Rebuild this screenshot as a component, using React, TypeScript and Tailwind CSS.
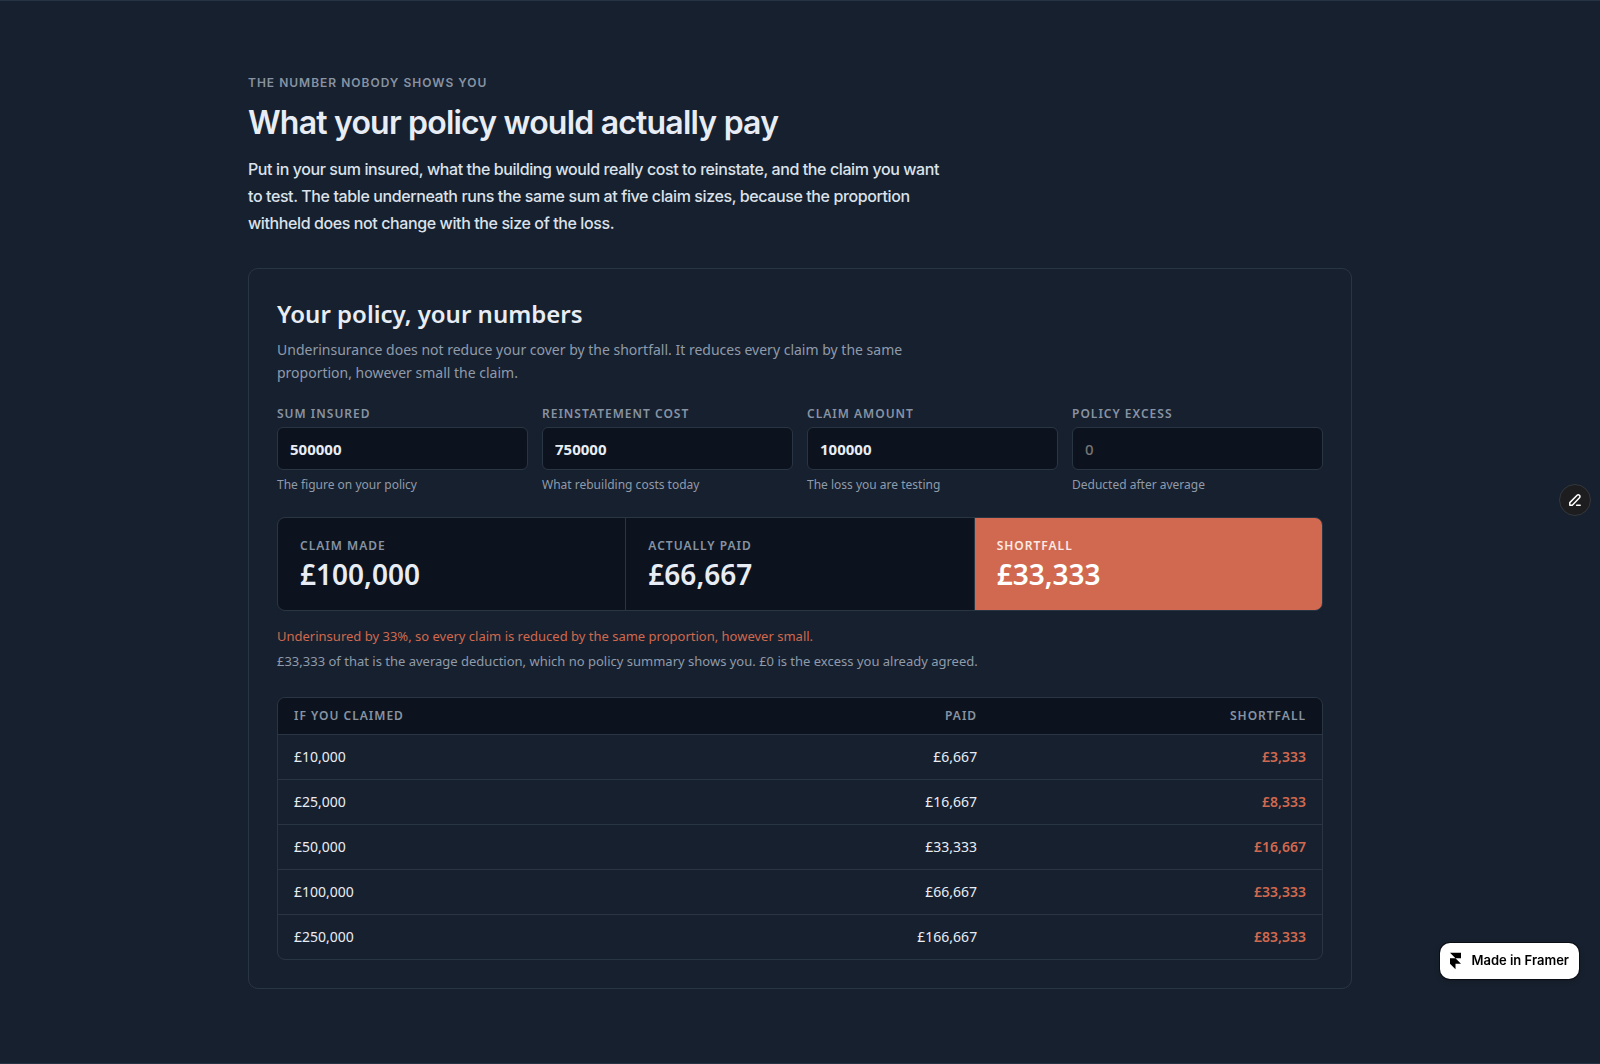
import { useState } from "react";

type FieldKey = "insured" | "reinstatement" | "claim" | "excess";

const FIELDS: { key: FieldKey; label: string; hint: string }[] = [
  { key: "insured", label: "Sum insured", hint: "The figure on your policy" },
  { key: "reinstatement", label: "Reinstatement cost", hint: "What rebuilding costs today" },
  { key: "claim", label: "Claim amount", hint: "The loss you are testing" },
  { key: "excess", label: "Policy excess", hint: "Deducted after average" },
];

const CLAIM_SIZES = [10000, 25000, 50000, 100000, 250000];

const pounds = (n: number) => "£" + Math.round(n).toLocaleString("en-GB");

function FramerBadge() {
  return (
    <a
      href="#framer"
      className="fixed right-[21px] bottom-[85px] flex h-9 items-center gap-2.5 rounded-[10px] bg-white px-2.5 font-['Inter',sans-serif] text-[13px] font-semibold text-black shadow-[0_0_0_1px_#0a0d14,0_2px_6px_rgba(0,0,0,0.2)]"
    >
      <svg width="11" height="18" viewBox="0 0 12 18" fill="currentColor" aria-hidden="true">
        <path d="M0 0h12v6H6zM0 6h6l6 6H0zM0 12h6v6z" />
      </svg>
      Made in Framer
    </a>
  );
}

function EditButton() {
  return (
    <button
      type="button"
      aria-label="Edit content"
      className="fixed top-[484px] right-[9px] flex size-8 items-center justify-center rounded-full border border-[#34383d] bg-[#1d1d1f] text-white"
    >
      <svg
        width="14"
        height="14"
        viewBox="0 0 14 14"
        fill="none"
        stroke="currentColor"
        strokeWidth="1.5"
        strokeLinejoin="round"
        strokeLinecap="round"
        aria-hidden="true"
      >
        <path d="M1.8 12.2v-2.6l7.3-7.3a1.6 1.6 0 0 1 2.3 0l.1.1a1.6 1.6 0 0 1 0 2.3L4.3 12.2z" />
        <path d="M8.6 12.2h3.6" />
      </svg>
    </button>
  );
}

export default function App() {
  const [values, setValues] = useState<Record<FieldKey, string>>({
    insured: "500000",
    reinstatement: "750000",
    claim: "100000",
    excess: "",
  });

  const num = (k: FieldKey) => Number(values[k]) || 0;
  const ratio = num("reinstatement") > 0 ? Math.min(1, num("insured") / num("reinstatement")) : 1;
  const excess = num("excess");
  const payout = (claim: number) => Math.max(0, claim * ratio - excess);
  const claim = num("claim");
  const paid = payout(claim);

  const results = [
    { label: "Claim made", value: pounds(claim), accent: false },
    { label: "Actually paid", value: pounds(paid), accent: false },
    { label: "Shortfall", value: pounds(claim - paid), accent: true },
  ];

  return (
    <main className="min-h-screen border-y border-[#263343] bg-[#17202e] px-6 pt-[73px] pb-[74px] font-['Noto_Sans',sans-serif] text-[#e8edf5]">
      <div className="mx-auto max-w-[1104px]">
        <header className="font-['Inter',sans-serif]">
          <p className="text-xs leading-[18px] font-semibold tracking-[1px] text-[#8793a3] uppercase">
            The number nobody shows you
          </p>
          <h1 className="mt-[11px] text-[32px] leading-10 font-semibold tracking-tight">
            What your policy would actually pay
          </h1>
          <p className="mt-[13px] max-w-[700px] text-base leading-[27px] font-medium tracking-tight text-[#dbe2eb]">
            Put in your sum insured, what the building would really cost to reinstate, and the claim you want
            to test. The table underneath runs the same sum at five claim sizes, because the proportion
            withheld does not change with the size of the loss.
          </p>
        </header>

        <section className="mt-[31px] rounded-[10px] border border-[#2a3544] p-7" aria-labelledby="calc-title">
          <h2 id="calc-title" className="text-2xl leading-[34px] font-semibold">
            Your policy, your numbers
          </h2>
          <p className="mt-[7px] max-w-[640px] text-sm leading-[23px] text-[#8f9bab]">
            Underinsurance does not reduce your cover by the shortfall. It reduces every claim by the same
            proportion, however small the claim.
          </p>

          <div className="mt-[21px] grid grid-cols-4 gap-3.5">
            {FIELDS.map((f) => (
              <div key={f.key}>
                <label
                  htmlFor={f.key}
                  className="block text-xs leading-[18px] font-semibold tracking-[1px] text-[#8793a3] uppercase"
                >
                  {f.label}
                </label>
                <input
                  id={f.key}
                  inputMode="numeric"
                  placeholder="0"
                  value={values[f.key]}
                  onChange={(e) => setValues({ ...values, [f.key]: e.target.value })}
                  className="mt-1 block h-[43px] w-full rounded-md border border-[#2a3544] bg-[#0d131e] px-3 text-[15px] font-bold text-[#e8edf5] outline-none placeholder:font-medium placeholder:text-[#757575]"
                />
                <p className="mt-1.5 text-xs leading-[18px] text-[#8f9bab]">{f.hint}</p>
              </div>
            ))}
          </div>

          <dl className="mt-[23px] grid grid-cols-3 gap-px overflow-hidden rounded-lg border border-[#2a3544] bg-[#2a3544]">
            {results.map((r) => (
              <div
                key={r.label}
                className={r.accent ? "bg-[#d0694f] px-[22px] py-[19px] text-white" : "bg-[#0d131e] px-[22px] py-[19px]"}
              >
                <dt
                  className={
                    r.accent
                      ? "text-xs leading-[18px] font-semibold tracking-[1px] text-[#fbe9e4] uppercase"
                      : "text-xs leading-[18px] font-semibold tracking-[1px] text-[#8793a3] uppercase"
                  }
                >
                  {r.label}
                </dt>
                <dd className="mt-0.5 text-[28px] leading-[34px] font-semibold">{r.value}</dd>
              </div>
            ))}
          </dl>

          <p className="mt-[15px] text-[13px] leading-5 text-[#d0694f]">
            Underinsured by {Math.round((1 - ratio) * 100)}%, so every claim is reduced by the same proportion,
            however small.
          </p>
          <p className="mt-[5px] text-[13px] leading-5 text-[#8f9bab]">
            {pounds(claim * (1 - ratio))} of that is the average deduction, which no policy summary shows you.{" "}
            {pounds(excess)} is the excess you already agreed.
          </p>

          <div className="mt-[26px] overflow-hidden rounded-lg border border-[#2a3544]">
            <table className="w-full table-fixed border-collapse text-left">
              <thead className="bg-[#0d131e] text-xs leading-[18px] tracking-[1px] text-[#8793a3] uppercase">
                <tr>
                  <th scope="col" className="w-[37%] px-4 py-[9px] font-semibold">
                    If you claimed
                  </th>
                  <th scope="col" className="px-4 py-[9px] text-right font-semibold">
                    Paid
                  </th>
                  <th scope="col" className="w-[31.5%] px-4 py-[9px] text-right font-semibold">
                    Shortfall
                  </th>
                </tr>
              </thead>
              <tbody className="text-sm leading-[22px]">
                {CLAIM_SIZES.map((c) => (
                  <tr key={c} className="border-t border-[#2a3544]">
                    <td className="px-4 py-[11px]">{pounds(c)}</td>
                    <td className="px-4 py-[11px] text-right">{pounds(payout(c))}</td>
                    <td className="px-4 py-[11px] text-right font-semibold text-[#d0694f]">
                      {pounds(c - payout(c))}
                    </td>
                  </tr>
                ))}
              </tbody>
            </table>
          </div>
        </section>
      </div>
      <EditButton />
      <FramerBadge />
    </main>
  );
}
